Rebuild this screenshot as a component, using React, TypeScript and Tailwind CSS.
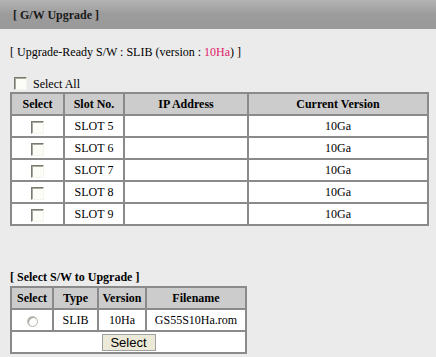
import React from "react";

const cell = "border border-[#8a8a8a] text-center align-middle p-0";

function Checkbox() {
  return (
    <span className="inline-block w-[13px] h-[13px] bg-[#fdfdf8] border border-t-[#7a7a72] border-l-[#7a7a72] border-b-[#f4f4ee] border-r-[#f4f4ee] shadow-[inset_1px_1px_0_#a8a89c] align-middle" />
  );
}

function Radio() {
  return (
    <span className="inline-block w-[11px] h-[11px] rounded-full bg-white border border-[#b8b8b0] shadow-[inset_1px_1px_1px_#9a9a92] align-middle" />
  );
}

export default function App() {
  const slots = ["SLOT 5", "SLOT 6", "SLOT 7", "SLOT 8", "SLOT 9"];
  return (
    <div
      className="w-[436px] h-[357px] bg-[#ebebeb] text-black overflow-hidden"
      style={{ fontFamily: '"Liberation Serif", "Times New Roman", serif' }}
    >
      <div className="h-[29px] bg-gradient-to-b from-[#b4b4b4] via-[#9c9c9c] to-[#999999] flex items-center pl-[13px]">
        <span className="text-[12px] font-bold text-[#1a1a1a]">[ G/W Upgrade ]</span>
      </div>

      <div className="pl-[10px] pt-[16px] text-[12px] leading-[15px]">
        [ Upgrade-Ready S/W : SLIB (version : <span className="text-[#e0206a]">10Ha</span>) ]
      </div>

      <div className="flex items-center pl-[14px] mt-[17px] h-[13px] text-[12px]">
        <Checkbox />
        <span className="ml-[6px]">Select All</span>
      </div>

      <div className="pl-[10px] mt-[2px]">
        <table className="border-separate border-spacing-0 border border-[#8a8a8a] w-[419px] text-[12px] table-fixed">
          <colgroup>
            <col className="w-[53px]" />
            <col className="w-[60px]" />
            <col className="w-[124px]" />
            <col />
          </colgroup>
          <thead>
            <tr className="h-[22px] bg-[#cccccc] font-bold">
              <td className={cell}>Select</td>
              <td className={cell}>Slot No.</td>
              <td className={cell}>IP Address</td>
              <td className={cell}>Current Version</td>
            </tr>
          </thead>
          <tbody>
            {slots.map((s) => (
              <tr key={s} className="h-[22px] bg-white">
                <td className={cell}>
                  <Checkbox />
                </td>
                <td className={cell}>{s}</td>
                <td className={cell}></td>
                <td className={cell}>10Ga</td>
              </tr>
            ))}
          </tbody>
        </table>
      </div>

      <div className="pl-[10px] mt-[44px] text-[12px] font-bold leading-[15px]">
        [ Select S/W to Upgrade ]
      </div>

      <div className="pl-[10px] mt-[1px]">
        <table className="border-separate border-spacing-0 border border-[#8a8a8a] w-[237px] text-[12px] table-fixed">
          <colgroup>
            <col className="w-[42px]" />
            <col className="w-[45px]" />
            <col className="w-[48px]" />
            <col />
          </colgroup>
          <tbody>
            <tr className="h-[22px] bg-[#cccccc] font-bold">
              <td className={cell}>Select</td>
              <td className={cell}>Type</td>
              <td className={cell}>Version</td>
              <td className={cell}>Filename</td>
            </tr>
            <tr className="h-[22px] bg-white">
              <td className={cell}>
                <Radio />
              </td>
              <td className={cell}>SLIB</td>
              <td className={cell}>10Ha</td>
              <td className={cell}>GS55S10Ha.rom</td>
            </tr>
            <tr className="h-[22px] bg-white">
              <td className={cell} colSpan={4}>
                <button
                  className="w-[54px] h-[17px] bg-[#ece9d8] border border-[#a0a0a0] text-[13px] leading-[15px] text-black align-middle"
                  style={{ fontFamily: '"Liberation Sans", Arial, sans-serif' }}
                >
                  Select
                </button>
              </td>
            </tr>
          </tbody>
        </table>
      </div>
    </div>
  );
}
